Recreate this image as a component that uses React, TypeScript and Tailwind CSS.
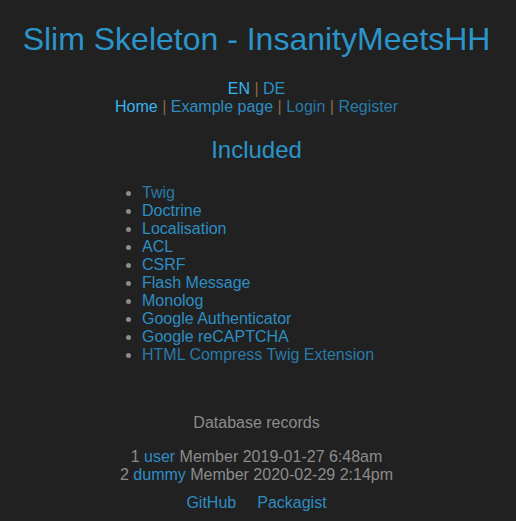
import React from "react";

const items: { t: string; dark?: boolean }[] = [
  { t: "Twig", dark: true },
  { t: "Doctrine" },
  { t: "Localisation" },
  { t: "ACL" },
  { t: "CSRF" },
  { t: "Flash Message" },
  { t: "Monolog" },
  { t: "Google Authenticator" },
  { t: "Google reCAPTCHA" },
  { t: "HTML Compress Twig Extension", dark: true },
];

export default function App() {
  return (
    <div
      className="min-h-[521px] bg-[#212121] text-[#8c8c8c] text-[16px] leading-[18px]"
      style={{ fontFamily: '"Liberation Sans", Arial, sans-serif' }}
    >
      <div className="pt-[21px] pr-[3px]">
        <h1 className="text-center text-[32px] leading-[37px] text-[#2b94c9]">
          Slim Skeleton - InsanityMeetsHH
        </h1>
        <div className="mt-[22px] text-center">
          <div>
            <a className="text-[#38b4ee]">EN</a>{" "}
            <span className="text-[#8a6a40]">|</span>{" "}
            <a className="text-[#2d8ec4]">DE</a>
          </div>
          <div>
            <a className="text-[#38b4ee]">Home</a>{" "}
            <span className="text-[#8a6a40]">|</span>{" "}
            <a className="text-[#2d8ec4]">Example page</a>{" "}
            <span className="text-[#8a6a40]">|</span>{" "}
            <a className="text-[#297aa9]">Login</a>{" "}
            <span className="text-[#8a6a40]">|</span>{" "}
            <a className="text-[#297aa9]">Register</a>
          </div>
        </div>
        <h2 className="mt-[20px] text-center text-[24px] leading-[27.6px] text-[#2b94c9]">
          Included
        </h2>
        <ul className="mt-[20px] ml-[102px] list-disc pl-[40px]">
          {items.map((i) => (
            <li key={i.t}>
              <a className={i.dark ? "text-[#297aa9]" : "text-[#2d8ec4]"}>{i.t}</a>
            </li>
          ))}
        </ul>
        <div className="mt-[50px] text-center">Database records</div>
        <div className="mt-[16px] text-center">
          <div>
            1 <a className="text-[#2d8ec4]">user</a> Member 2019-01-27 6:48am
          </div>
          <div>
            2 <a className="text-[#2d8ec4]">dummy</a> Member 2020-02-29 2:14pm
          </div>
        </div>
        <div className="mt-[10px] flex justify-center gap-[21px]">
          <a className="text-[#2d8ec4]">GitHub</a>
          <a className="text-[#2d8ec4]">Packagist</a>
        </div>
      </div>
    </div>
  );
}
